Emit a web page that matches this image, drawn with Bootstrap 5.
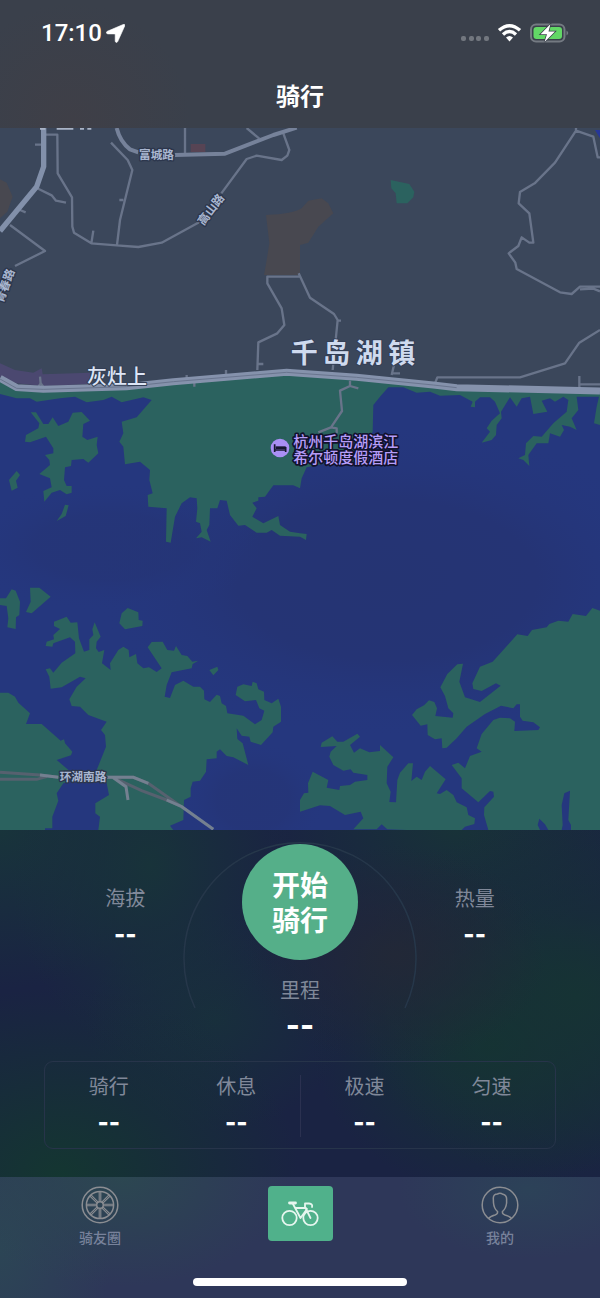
<!DOCTYPE html>
<html lang="zh-CN">
<head>
<meta charset="utf-8">
<meta name="viewport" content="width=device-width, initial-scale=1">
<title>骑行</title>
<link href="https://cdn.jsdelivr.net/npm/bootstrap@5.3.0/dist/css/bootstrap.min.css" rel="stylesheet">
<style>
  body { font-family: Inter, "Noto Sans CJK SC", sans-serif; background: #1a2541; color: #fff; }
  .top-bar { background: radial-gradient(circle at 12% 95%, #3f3f47, transparent 22%), #3a404b; }
  .status-row { height: 64px; padding: 2px 31px 0 41px; }
  .clock { font-family: Roboto, sans-serif; font-size: 24px; line-height: 28px; font-weight: 500; }
  .page-title { font-size: 24px; line-height: 32px; font-weight: 700; padding: 17px 0 15px; }
  .map-area { min-height: 240px; background: #25367c; }
  .map-area svg { flex: 1 1 0; min-width: 0; }
  .map-area text { font-family: "Noto Sans CJK SC", sans-serif; font-weight: 500; paint-order: stroke; stroke-linejoin: round; }
  .land { fill: #2b625f; }
  .lane { fill: none; stroke: #69748a; stroke-width: 7; stroke-linejoin: round; }
  .street { fill: none; stroke: #76829a; stroke-width: 12; stroke-linejoin: round; }
  .map-area .road-name { font-size: 35px; font-weight: 700; fill: #a9b6d0; stroke: #2c364c; stroke-width: 8; }
  .map-area .place { fill: #dde5f5; stroke: #343f56; stroke-width: 6; }
  .map-area .town { font-weight: 700; fill: #cfdaee; }
  .hotel { font-size: 45px; fill: #b69df8; stroke: #12122d; stroke-width: 10; }
  .stats {
    padding: 14px 38px 28px;
    background:
      radial-gradient(ellipse 150px 110px at 66% 36%, #222837, transparent),
      radial-gradient(ellipse 220px 190px at 96% 48%, #163334, transparent),
      radial-gradient(ellipse 190px 110px at 76% 0%, #183238, transparent),
      radial-gradient(ellipse 140px 190px at 25% 10%, #18333a, transparent),
      radial-gradient(ellipse 180px 150px at 82% 62%, #153333, transparent),
      radial-gradient(ellipse 240px 190px at 10% 100%, #143631, transparent),
      radial-gradient(ellipse 180px 160px at 0% 0%, #18343b, transparent),
      radial-gradient(ellipse 130px 110px at 36% 55%, #182f3c, transparent),
      #1a2343;
  }
  .stat-side { padding-top: 43px; }
  .stat-name { font-size: 20px; line-height: 24px; color: #808899; }
  .stat-value { font-size: 24px; line-height: 28px; font-weight: 800; margin-top: 10px; }
  .stat-total { font-size: 30px; line-height: 32px; font-weight: 800; margin-top: 6px; }
  .start-btn, .start-btn:hover { width: 116px; height: 116px; background: #55af89; color: #fff; font-size: 28px; line-height: 35px; font-weight: 700; margin-bottom: 19px; }
  .dial { top: -4px; left: 50%; width: 234px; transform: translateX(-50%); pointer-events: none; }
  .stat-box { margin: 20px 6px 0; padding: 13px 0 11px; border: 1px solid #27344a; border-radius: 9px; }
  .stat-box .half + .half { border-left: 1px solid #2b3150; }
  .tabs { padding: 9px 0 12px; background:
      radial-gradient(ellipse 170px 110px at 20% 0%, #2c4751, transparent),
      radial-gradient(ellipse 110px 180px at 0% 60%, #2c4555, transparent),
      radial-gradient(ellipse 130px 70px at 88% 10%, #2c4258, transparent), #2e3759; }
  .tab-link { color: #78829b; font-size: 14px; line-height: 20px; font-weight: 500; }
  .ride-tab { width: 65px; height: 55px; border-radius: 4px; background: #50b18b; }
  .home-pill { width: 214px; height: 8px; margin-top: 30px; }
</style>
</head>
<body class="min-vh-100 d-flex flex-column">

<header class="top-bar">
  <div class="status-row d-flex justify-content-between align-items-center">
    <div class="d-flex align-items-center gap-1">
      <span class="clock">17:10</span>
      <svg width="19" height="19" viewBox="0 0 19 19" aria-hidden="true"><path d="M17.200.5C18.400 0 19.200.9 18.700 2L11.700 17.600C11.100 19 9.200 18.600 9.200 17V10.600Q9.200 9.900 8.500 9.900H2C.2 9.900-.2 8 1.300 7.300Z" fill="#fff" stroke="#fff" stroke-width=".6"/></svg>
    </div>
    <svg width="108" height="20" viewBox="0 0 108 20" aria-hidden="true">
      <g fill="#72777f"><rect x="0" y="13" width="5" height="5" rx="2"/><rect x="8" y="13" width="5" height="5" rx="2"/><rect x="15" y="13" width="5" height="5" rx="2"/><rect x="23" y="13" width="5" height="5" rx="2"/></g>
      <g fill="none" stroke="#fff" stroke-width="3.4"><path d="M38 7.3Q48.500-2 59 7.300"/><path d="M42 11.500Q48.500 5.700 55 11.500"/></g>
      <path d="M45 14.500Q48.500 11.500 52 14.500L48.500 18.500Z" fill="#fff"/>
      <rect x="70" y="1.500" width="33.500" height="17" rx="5" fill="none" stroke="#747a82" stroke-width="2"/>
      <path d="M105.500 7.500Q109 10 105.500 12.500Z" fill="#747a82"/>
      <rect x="72.500" y="4" width="28.500" height="12" rx="3" fill="#62d766"/>
      <path d="M89.500 1L79.500 11.300H86L83.500 19L94 8.600H87.500Z" fill="#fff" stroke="#3a404b" stroke-width="1.500" paint-order="stroke"/>
    </svg>
  </div>
  <h1 class="page-title text-center mb-0">骑行</h1>
</header>

<main class="flex-grow-1 d-flex flex-column">
  <section class="map-area flex-grow-1 d-flex" aria-label="地图">
    <!-- Map units: three per pixel at the base width -->
    <svg viewBox="0 384 1800 2106" preserveAspectRatio="xMidYMid slice" role="img" aria-label="千岛湖镇地图">
      <defs>
        <radialGradient id="deep"><stop offset="0" stop-color="#253473"/><stop offset=".5" stop-color="#253475"/><stop offset="1" stop-color="#25377e" stop-opacity="0"/></radialGradient>
      </defs>
      <rect y="384" width="1800" height="2106" fill="#25377e"/>
      <ellipse cx="1160" cy="1740" rx="900" ry="480" fill="url(#deep)"/>
      <ellipse cx="330" cy="1640" rx="460" ry="200" fill="url(#deep)" opacity=".6"/>
      <ellipse cx="760" cy="2400" rx="220" ry="180" fill="url(#deep)" opacity=".6"/>
      <path fill="#3b475b" d="M0 384H1800V1173L1370 1163 1300 1155 1070 1132 860 1117 520 1145 380 1160 130 1168 50 1163 0 1135Z"/>
      <path fill="#26379a" d="M1785 390h15v25z"/>

      <!-- Built-up patches -->
      <path fill="#484850" d="M0 538L20 548 38 590 22 635 5 650 0 655ZM798 645Q880 642 905 625L925 602 965 595 985 610 1000 640 955 680 925 728 900 735V825H792L800 780 808 730Z"/>
      <path fill="#574454" d="M572 432h44v24h-44z"/>
      <path fill="#4b4870" d="M0 1090L45 1110 100 1118 125 1105 128 1123 270 1118V1152L130 1158 50 1150 0 1130Z"/>
      <path class="land" d="M1172 540L1228 552 1243 575 1240 592 1222 610H1190L1187 580 1174 565Z"/>

      <!-- North shore and its peninsulas -->
      <g class="land" transform="translate(0 1140)">
        <path d="M0-5L50 25 130 30 380 20 520 5 860-22 900-22 1070-8 1300 15 1370 23 1800 35V135L1782 130 1790 80 1797 50 1730 50 1735 90 1715 115 1730 150 1710 140 1685 135 1692 150 1680 170 1650 160 1645 190 1610 190 1585 225 1588 258 1570 240 1555 235 1575 225 1578 190 1600 168 1625 170 1660 130 1700 95 1705 60 1690 50 1665 65 1650 55 1625 62 1642 95 1600 102 1590 50 1565 55 1550 80 1530 52 1503 95 1505 115 1490 135 1488 165 1475 180 1445 188 1470 155 1460 145 1475 122 1500 100 1485 65 1470 52 1440 52 1425 65 1425 82 1412 80 1418 65 1380 45 1320 47 1290 35 1250 38 1210 22 1165 22 1140 50 1120 75 1118 155 1065 245 985 245 970 252 920 262 905 295 900 325 880 316 820 316 795 350 775 352 775 362 757 368 770 385 757 410 790 430 835 408 840 435 870 455 900 460 920 462 918 480 900 470 840 467 815 450 800 458 770 458 735 435 715 437 690 405 680 362 660 360 652 385 630 385 628 435 620 450 632 485 605 472 588 475 605 455 600 430 588 425 592 385 590 355 570 352 545 370 525 410 512 488 498 485 500 385 445 380 443 345 458 340 448 300 450 270 420 245 375 253 370 200 358 185 370 160 365 125 410 112 455 60 430 52 365 67 335 50 310 60 260 67 225 50 180 55 110 65 90 55 50 55 0 42Z"/>
        <path d="M92 97L108 97 130 132H145L158 112 175 138 205 125 218 98 245 96 270 122 250 132 247 170 262 180 293 170 290 195 295 220 265 248 250 237 215 240 213 258 195 262 192 300 200 318H215V338L200 343 180 330 155 338 133 365 130 333 155 322 150 295 118 282 150 255 148 240 135 225 160 220 160 205 138 170 90 187 75 185 78 165 115 145 118 130Z"/>
        <path d="M50 273L60 285 48 302 53 323 35 332 27 300ZM195 374L206 376 197 408 170 423 185 402Z"/>
      </g>

      <!-- South-west islands -->
      <g class="land" transform="translate(0 1710)">
        <path d="M0 85H18L35 58 47 62 60 95 58 135 48 142 47 177 22 172 25 145 20 108 0 105ZM90 53H118L152 80 95 130 78 126 92 95ZM383 114L415 127 416 150 428 152 427 168 375 178 358 160 365 130ZM628 300L652 290 655 300 640 316Z"/>
        <path d="M162 155L200 140 212 158 232 157 237 205 252 245 268 240V208L280 195 277 178 284 157 302 200 290 215 288 235 296 246 313 240 306 280 332 300 330 280 355 240 370 230 386 240 388 262 408 252 412 280 430 295 447 292 470 306 485 295 443 232 455 216 488 215 502 240 522 242 528 228 545 255 562 258 577 275 595 272 578 282 575 295 515 307 500 345 494 380 510 384 525 345 550 332 580 350 600 350 612 362 613 388 630 396 650 374 660 378 665 400 678 408 682 430 730 437 765 463 785 450 793 422 778 415 768 390 735 394 707 375 712 350 730 343 755 348 758 335 770 340 775 358 792 365 793 390 815 400 835 386 843 410V455L820 470 818 487 783 525 752 515 748 500 725 497 710 475 712 507 728 520 745 585 700 562 680 558 660 538 650 545V565L620 568 618 605 600 632 578 635 572 655V680L552 690 550 750 510 767 520 780H295L300 740 286 730V700L327 675 320 640 290 600 318 530 315 495 303 480 320 455 265 435 240 410 215 408 208 388 230 350 257 325 240 320 185 352 152 356 148 320 137 298 150 295 160 308 185 278 226 250 225 215 210 202 160 220 157 230 137 228 140 215 162 208 160 195 180 177 162 168Z"/>
        <path d="M0 368H25L45 380 55 398 90 430 78 462H125L182 512 192 508 195 520 217 545 213 556 170 570 208 602 208 635 190 640 170 670 175 692 157 740V775H135V780H0Z"/>
      </g>

      <!-- South-east islands -->
      <g class="land" transform="translate(900 1710)">
        <path d="M0 690L12 670 25 668 24 640 38 605 85 630 80 653 118 660 120 648 150 645 165 635 202 630V615L160 608 152 598 130 602 100 585 88 560 92 545 110 528 62 531 65 518 97 499 112 515 130 515 172 491 180 500 150 525 162 548 180 535 208 547 240 543V525L280 562 262 590 260 640 272 665 268 696 288 697 292 630 300 608 325 580 339 580 334 633 350 620 365 630 375 605 390 588 437 628 410 670 420 672 440 660 460 675 470 697 500 712 505 735 525 745 523 762 495 770 485 780H320L262 778 245 763 230 778 160 778 190 745 182 725 135 735 90 708 60 706 0 725Z"/>
        <path d="M336 435L350 418 372 406 387 391 403 396 411 415 406 438 458 443 460 430 445 415 435 378 421 352 442 312 472 283 489 281 478 335 495 382 540 396 602 347 588 340 545 363 520 357 517 340 540 290 578 275 652 193 683 198 696 180 740 172 748 162 775 152 805 155 818 132 858 138 877 114 900 122V780H813V765L805 750 810 662 793 670 785 705 788 765 785 780H745L735 763 718 746 713 765 720 780H565L552 735 553 712 582 680 580 665 570 663 535 697 485 655V625L455 585 475 578 495 595 510 558 545 545 530 535 545 492 580 450 600 443 630 445 645 455 643 483 715 480 720 472 700 457 668 452 660 440V403L650 403 640 415 603 407 555 432 500 470 470 505 440 533 427 535 425 505 405 508 383 495 382 463 362 467Z"/>
      </g>

      <!-- Lanes and streets -->
      <path class="lane" d="M135 404H172L173 520 216 592 217 680 222 698 274 730 350 736 415 741 485 728 600 665M664 580L740 477 770 467 845 480 862 467 868 450 850 400M333 428L383 480 397 510 360 660 351 735M105 434H125M110 564L155 586 168 602 198 608M274 730L280 692M30 675L135 753 45 798M60 630L77 637M370 600H358"/>
      <path class="lane" d="M900 830H802V850L845 925 853 975 832 1000 775 1027 772 1110M772 1092H790M896 820L930 893 1002 942 1013 960 1007 1020 998 1110M1013 962H1023M1175 1125L1182 1095M1175 1120H1200M1728 384L1728 392 1780 410 1793 472H1800M1728 392L1665 488 1604 550 1560 576 1556 610 1588 640 1600 728H1588L1565 712 1555 738 1526 760 1546 788 1550 807 1680 877 1715 882 1740 860H1800M1740 868L1780 866 1800 874M1800 990L1738 1028 1695 1090 1560 1132H1312L1305 1150M1738 1128V1165M1738 1153H1800"/>
      <path class="lane" d="M1050 1142V1158L1020 1172 1026 1233 993 1282 955 1297M1050 1158L1075 1165M993 1282L1010 1285 1010 1300"/>
      <path class="lane" d="M555 384V460M740 384L778 416M560 1125V1143M678 1110V1130M583 1145V1160M120 1130L122 1150 112 1165M122 1150L132 1163"/>
      <path class="street" d="M350 384Q360 425 390 448L415 457M525 465L675 461 820 405 890 383"/>
      <path d="M131 384V500L110 560 0 693" fill="none" stroke="#8290aa" stroke-width="16"/>
      <path d="M0 1135L50 1163 130 1168 380 1160 520 1145 860 1117 900 1120 1070 1132 1300 1155 1370 1163 1800 1173" fill="none" stroke="#8592ac" stroke-width="21"/>
      <path d="M0 1137L50 1165 130 1168 380 1160 520 1145 860 1117 900 1120 1070 1132 1300 1155 1370 1163" fill="none" stroke="#69758e" stroke-width="3"/>
      <path fill="none" stroke="#56616f" stroke-width="9" d="M0 2317L120 2325 175 2332M0 2338H110L140 2330M320 2332H400L445 2350 540 2417M345 2335L425 2372 500 2400 540 2417"/>
      <path fill="none" stroke="#748090" stroke-width="9" d="M340 2333L378 2360 384 2400M500 2400L545 2420 640 2488M120 2325L175 2332M320 2332H400L445 2350"/>
      <path stroke="#a9b4c7" stroke-width="6" d="M170 386h50M240 386h12M262 386h12M120 386h16"/>

      <!-- Names -->
      <text class="road-name" x="417" y="478">富城路</text>
      <text class="road-name" transform="translate(632 628) rotate(-53)" text-anchor="middle" y="13">高山路</text>
      <text class="road-name" transform="translate(14 857) rotate(-70)" text-anchor="middle" y="13">青春路</text>
      <text class="road-name" x="179" y="2343">环湖南路</text>
      <text class="place" x="261" y="1152" font-size="60">灰灶上</text>
      <text class="place town" x="872 969 1067 1165" y="1089" font-size="81">千岛湖镇</text>
      <text class="hotel" x="880" y="1342">杭州千岛湖滨江<tspan x="880" dy="46">希尔顿度假酒店</tspan></text>
      <circle cx="840" cy="1344" r="28" fill="#a98ff4"/>
      <path d="M824 1333V1356M824 1350H857M857 1341V1356" fill="none" stroke="#17172f" stroke-width="5"/>
      <path d="M827 1339H857V1347H827Z" fill="#17172f"/>
    </svg>
  </section>

  <section class="stats position-relative" aria-label="骑行数据">
    <div class="row g-0 text-center position-relative">
      <svg class="dial position-absolute p-0" viewBox="0 0 234 170" aria-hidden="true"><path d="M12 168A116 116 0 1 1 222 168" fill="none" stroke="#26374a" stroke-width="1.500"/></svg>
      <div class="col-4 stat-side">
        <div class="stat-name">海拔</div>
        <div class="stat-value">--</div>
      </div>
      <div class="col-4 position-relative">
        <button type="button" class="start-btn btn border-0 rounded-circle p-0 pt-1">开始<br>骑行</button>
        <div class="stat-name">里程</div>
        <div class="stat-total">--</div>
      </div>
      <div class="col-4 stat-side">
        <div class="stat-name">热量</div>
        <div class="stat-value">--</div>
      </div>
    </div>
    <div class="stat-box row g-0 text-center">
      <div class="half col-6 row g-0">
        <div class="col-6"><div class="stat-name">骑行</div><div class="stat-value">--</div></div>
        <div class="col-6"><div class="stat-name">休息</div><div class="stat-value">--</div></div>
      </div>
      <div class="half col-6 row g-0">
        <div class="col-6"><div class="stat-name">极速</div><div class="stat-value">--</div></div>
        <div class="col-6"><div class="stat-name">匀速</div><div class="stat-value">--</div></div>
      </div>
    </div>
  </section>
</main>

<nav class="tabs" aria-label="主导航">
  <div class="row g-0 text-center">
    <div class="col-4">
      <a href="#circle" class="tab-link d-inline-flex flex-column align-items-center gap-1 text-decoration-none">
        <svg width="38" height="38" viewBox="0 0 38 38" fill="none" stroke="#8b8d92" stroke-width="1.500" aria-hidden="true">
          <circle cx="19" cy="19" r="17.800"/><circle cx="19" cy="19" r="13.600"/><circle cx="19" cy="19" r="3.300"/>
          <g id="spokes"><path d="M18.200 5.500V15.700M19.800 5.500V15.700M18.200 22.300V32.500M19.800 22.300V32.500M5.500 18.200H15.700M5.500 19.800H15.700M22.300 18.200H32.500M22.300 19.800H32.500" stroke-width="1.100"/></g>
          <use href="#spokes" transform="rotate(45 19 19)"/>
        </svg>
        骑友圈
      </a>
    </div>
    <div class="col-4">
      <a href="#ride" class="ride-tab d-inline-flex align-items-center justify-content-center" aria-label="骑行">
        <svg width="38" height="26" viewBox="0 0 38 26" fill="none" stroke="#e6f6ef" stroke-width="1.800" stroke-linecap="round" stroke-linejoin="round" aria-hidden="true">
          <circle cx="8.500" cy="17" r="7.200"/><circle cx="29.500" cy="17" r="7.200"/>
          <path d="M8.500 2H14.500" stroke-width="2.800"/><path d="M12 3L19.500 17 26 8M14 7H25M29.500 17L24 6V2.500H28Q32 3 31 6"/>
        </svg>
      </a>
    </div>
    <div class="col-4">
      <a href="#me" class="tab-link d-inline-flex flex-column align-items-center gap-1 text-decoration-none">
        <svg width="38" height="38" viewBox="0 0 38 38" fill="none" stroke="#8b8d92" stroke-width="1.500" aria-hidden="true">
          <circle cx="19" cy="19" r="17.800"/>
          <path d="M7.500 32.500Q9 30.500 14 29Q17 28 16.500 25.500Q13 22.500 12.500 17L12.300 12Q12.500 8 16.500 8Q19 6.500 22 8.300Q26 9.500 25.600 14V17Q25 22.500 21.500 25.500Q21 28 24 29Q29 30.500 30.500 32.500"/>
        </svg>
        我的
      </a>
    </div>
  </div>
  <div class="home-pill bg-white rounded-pill mx-auto"></div>
</nav>

<script src="https://cdn.jsdelivr.net/npm/bootstrap@5.3.0/dist/js/bootstrap.bundle.min.js"></script>
</body>
</html>
